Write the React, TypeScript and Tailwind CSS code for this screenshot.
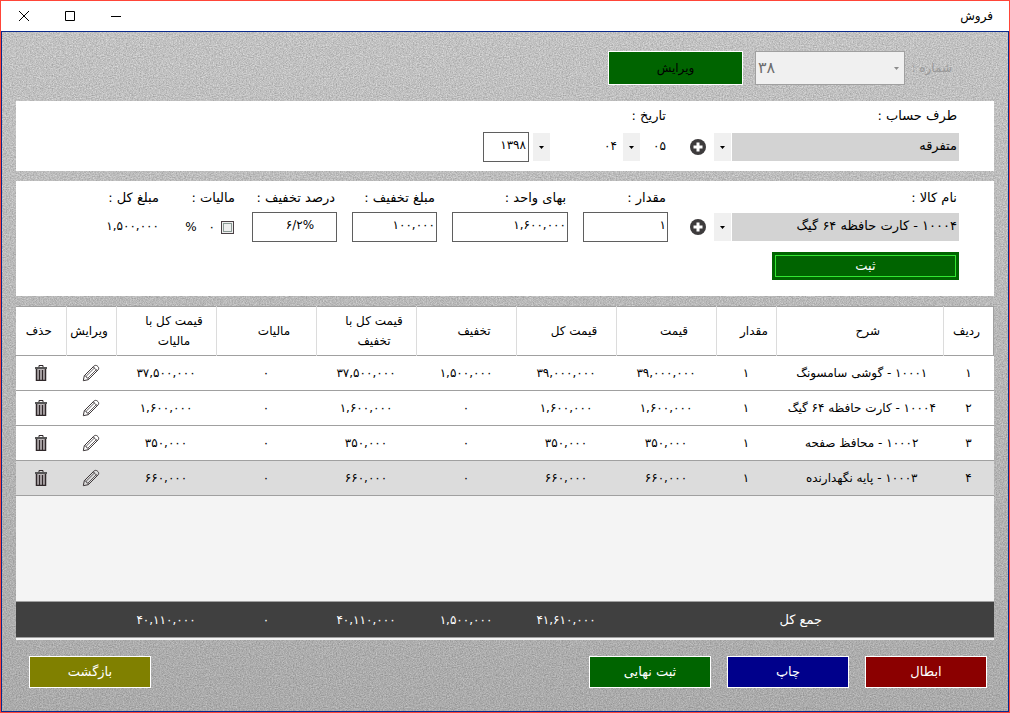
import { useState } from 'react';
import type { ReactNode } from 'react';
import clsx from 'clsx';

interface Line {
  title: string;
  qty: string;
  price: string;
  total: string;
  discount: string;
  afterDiscount: string;
  tax: string;
  afterTax: string;
}

const DIGITS = ['۰', '۱', '۲', '۳', '۴', '۵', '۶', '۷', '۸', '۹'];

const LINES: Line[] = [
  {
    title: '۱۰۰۰۱ - گوشی سامسونگ',
    qty: '۱',
    price: '۳۹,۰۰۰,۰۰۰',
    total: '۳۹,۰۰۰,۰۰۰',
    discount: '۱,۵۰۰,۰۰۰',
    afterDiscount: '۳۷,۵۰۰,۰۰۰',
    tax: '۰',
    afterTax: '۳۷,۵۰۰,۰۰۰',
  },
  {
    title: '۱۰۰۰۴ - کارت حافظه ۶۴ گیگ',
    qty: '۱',
    price: '۱,۶۰۰,۰۰۰',
    total: '۱,۶۰۰,۰۰۰',
    discount: '۰',
    afterDiscount: '۱,۶۰۰,۰۰۰',
    tax: '۰',
    afterTax: '۱,۶۰۰,۰۰۰',
  },
  {
    title: '۱۰۰۰۲ - محافظ صفحه',
    qty: '۱',
    price: '۳۵۰,۰۰۰',
    total: '۳۵۰,۰۰۰',
    discount: '۰',
    afterDiscount: '۳۵۰,۰۰۰',
    tax: '۰',
    afterTax: '۳۵۰,۰۰۰',
  },
  {
    title: '۱۰۰۰۳ - پایه نگهدارنده',
    qty: '۱',
    price: '۶۶۰,۰۰۰',
    total: '۶۶۰,۰۰۰',
    discount: '۰',
    afterDiscount: '۶۶۰,۰۰۰',
    tax: '۰',
    afterTax: '۶۶۰,۰۰۰',
  },
];

const INPUT = 'h-[30px] w-full border border-[#5f5f5f] bg-white px-px pb-1';

function Fabric() {
  return (
    <>
      <svg className="absolute inset-0 h-full w-full" aria-hidden="true">
        <filter id="fabric" x="0" y="0" width="100%" height="100%" colorInterpolationFilters="sRGB">
          <feTurbulence type="fractalNoise" baseFrequency="0.7 0.9" numOctaves="2" seed="4" />
          <feColorMatrix values="0.32 0 0 0 0.6  0.32 0 0 0 0.6  0.32 0 0 0 0.6  0 0 0 0 1" />
        </filter>
        <rect width="100%" height="100%" filter="url(#fabric)" />
      </svg>
      <div className="absolute inset-0 bg-linear-to-b from-black/0 to-black/12" />
    </>
  );
}

function PencilIcon() {
  return (
    <svg width="18" height="18" viewBox="0 0 18 18" fill="none" stroke="#3c3638" strokeLinejoin="round">
      <path d="M1.3 16.7l1-5L11.8 2.200c1-1 2.500-1.200 3.600-.1l.6.6c1 1 .9 2.400-.1 3.400L6.300 15.700z" />
      <path d="M2.300 11.700l1.800.5.5 1.500 1.500.4.2 1.600M4.200 12.200l8.600-8.600M6 14l8.600-8.600M11.200 2.900l3.900 3.900" strokeWidth="0.8" />
    </svg>
  );
}

function TrashIcon() {
  return (
    <svg width="12" height="16" viewBox="0 0 12 16" fill="none" stroke="#2f2729">
      <path d="M4 2.500v-2h4v2" />
      <path d="M0 3h12" stroke="#555" strokeWidth="2" />
      <path d="M1.500 4v11.500h9V4" strokeWidth="1.500" fill="#b9b3b5" />
      <path d="M4.500 5v10M7.500 5v10" strokeWidth="1.300" />
    </svg>
  );
}

function Caret({ className }: { className?: string }) {
  return (
    <svg width="5" height="3" viewBox="0 0 5 3" className={className} aria-hidden="true">
      <path d="M0 0h5L2.500 3z" fill="currentColor" />
    </svg>
  );
}

function AddButton({ label }: { label: string }) {
  return (
    <button type="button" aria-label={label} className="ms-2 me-[22px] shrink-0">
      <svg width="16" height="16" viewBox="0 0 16 16">
        <circle cx="8" cy="8" r="8" fill="#3d3b3c" />
        <path d="M8 3.500v9M3.500 8h9" stroke="#fff" strokeWidth="3" />
      </svg>
    </button>
  );
}

interface ComboProps {
  id: string;
  value: string;
  label?: string;
  className?: string;
  filled?: boolean;
}

function Combo({ id, value, label, className, filled }: ComboProps) {
  return (
    <div className={clsx('relative h-7 shrink-0', className)}>
      <select
        id={id}
        aria-label={label}
        defaultValue={value}
        className={clsx(
          'h-full w-full appearance-none ps-[2px] pe-[18px] pb-[2px]',
          filled ? 'bg-[#d3d3d3] text-[13px]' : 'bg-white',
        )}
      >
        <option>{value}</option>
      </select>
      <span className="pointer-events-none absolute inset-y-0 left-0 flex w-[18px] items-center justify-center border-r border-white bg-[#f0f0f0] pr-px">
        <Caret />
      </span>
    </div>
  );
}

interface FieldProps {
  id: string;
  label: string;
  className?: string;
  children: ReactNode;
}

function Field({ id, label, className, children }: FieldProps) {
  return (
    <div className={clsx('flex shrink-0 flex-col gap-1', className)}>
      <label htmlFor={id} className="h-5 ps-[2px] text-[13px] leading-5 whitespace-nowrap">
        {label}
      </label>
      <div className="flex h-[30px] items-center">{children}</div>
    </div>
  );
}

function TitleBar() {
  return (
    <header className="flex h-[30px] shrink-0 items-center justify-between bg-white">
      <h1 className="px-4">فروش</h1>
      <div dir="ltr" className="flex h-full">
        <button type="button" aria-label="بستن" className="flex w-[46px] items-center justify-center">
          <svg width="10" height="10" stroke="#000">
            <path d="M0 0l10 10M10 0L0 10" />
          </svg>
        </button>
        <button type="button" aria-label="بزرگ" className="flex w-[46px] items-center justify-center">
          <svg width="10" height="10" stroke="#000" fill="none">
            <path d="M.5.5h9v9h-9z" />
          </svg>
        </button>
        <button type="button" aria-label="کوچک" className="flex w-[46px] items-center justify-center">
          <svg width="10" height="10" stroke="#000">
            <path d="M0 5.500h10" />
          </svg>
        </button>
      </div>
    </header>
  );
}

function AccountPanel() {
  return (
    <section className="flex h-[70px] bg-white ps-[35px] pt-[5px]">
      <Field id="account" label="طرف حساب :" className="gap-[6px]">
        <Combo id="account" value="متفرقه" filled className="w-[245px]" />
        <AddButton label="طرف حساب جدید" />
      </Field>
      <Field id="day" label="تاریخ :" className="gap-[6px]">
        <Combo id="day" value="۰۵" className="w-[45px]" />
        <Combo id="month" label="ماه" value="۰۴" className="ms-1 w-[86px]" />
        <input
          aria-label="سال"
          defaultValue="۱۳۹۸"
          className="ms-1 h-[30px] w-[46px] border border-[#5f5f5f] ps-[2px] pb-1"
        />
      </Field>
    </section>
  );
}

function ItemPanel() {
  return (
    <section className="flex h-[115px] flex-col gap-[10px] bg-white ps-[35px] pt-[7px]">
      <div className="flex">
        <Field id="item" label="نام کالا :">
          <Combo id="item" value="۱۰۰۰۴ - کارت حافظه ۶۴ گیگ" filled className="w-[245px]" />
          <AddButton label="کالای جدید" />
        </Field>
        <div className="flex gap-[15px]">
          <Field id="qty" label="مقدار :" className="w-[85px]">
            <input id="qty" defaultValue="۱" className={INPUT} />
          </Field>
          <Field id="unit" label="بهای واحد :" className="w-[116px]">
            <input id="unit" defaultValue="۱,۶۰۰,۰۰۰" className={INPUT} />
          </Field>
          <Field id="off" label="مبلغ تخفیف :" className="w-[85px]">
            <input id="off" defaultValue="۱۰۰,۰۰۰" className={INPUT} />
          </Field>
          <Field id="percent" label="درصد تخفیف :" className="w-[85px]">
            <input id="percent" dir="ltr" defaultValue="۶/۲%" className={clsx(INPUT, 'ps-3 text-center')} />
          </Field>
          <Field id="tax" label="مالیات :" className="w-[61px]">
            <input
              id="tax"
              type="checkbox"
              className="ms-[3px] h-[13px] w-[13px] appearance-none border border-[#4a4044] bg-[#eee] outline-1 -outline-offset-3 outline-[#8a9a94]"
            />
            <span className="ms-[6px]">۰</span>
            <span className="ms-3">%</span>
          </Field>
          <div className="flex flex-col gap-1 ps-[2px]">
            <span className="h-5 text-[13px] leading-5">مبلغ کل :</span>
            <span className="h-[30px] leading-7">۱,۵۰۰,۰۰۰</span>
          </div>
        </div>
      </div>
      <button type="button" className="h-7 w-[187px] bg-[#006400] p-[3px] text-[13px] text-white">
        <span className="flex h-full items-center justify-center border border-[#32e632]">ثبت</span>
      </button>
    </section>
  );
}

function LinesTable() {
  const [selected, setSelected] = useState(3);
  const th = 'border-l border-[#dcdcdc] font-normal leading-5';

  return (
    <table className="w-full table-fixed border-collapse bg-[#f4f4f4] text-center">
      <colgroup>
        <col className="w-[50px]" />
        <col />
        <col className="w-[60px]" />
        <col className="w-[100px]" />
        <col className="w-[100px]" />
        <col className="w-[100px]" />
        <col className="w-[100px]" />
        <col className="w-[100px]" />
        <col className="w-[100px]" />
        <col className="w-[50px]" />
        <col className="w-[50px]" />
      </colgroup>
      <thead>
        <tr className="h-[49px] border-y border-[#a0a0a0] bg-white">
          <th className={clsx(th, 'border-r border-r-[#a0a0a0] pr-1')}>ردیف</th>
          <th className={clsx(th, 'pl-4')}>شرح</th>
          <th className={clsx(th, 'pl-4')}>مقدار</th>
          <th className={clsx(th, 'pl-4')}>قیمت</th>
          <th className={clsx(th, 'pl-4')}>قیمت کل</th>
          <th className={clsx(th, 'pl-4')}>تخفیف</th>
          <th className={clsx(th, 'pl-4')}>
            قیمت کل با
            <br />
            تخفیف
          </th>
          <th className={clsx(th, 'pl-4')}>مالیات</th>
          <th className={clsx(th, 'pl-4')}>
            قیمت کل با
            <br />
            مالیات
          </th>
          <th className={clsx(th, 'pr-1')}>ویرایش</th>
          <th className="pr-1 font-normal">حذف</th>
        </tr>
      </thead>
      <tbody>
        {LINES.map((line, i) => (
          <tr
            key={line.title}
            onClick={() => setSelected(i)}
            className={clsx('h-[35px] border-b border-[#a0a0a0]', selected === i ? 'bg-[#dcdcdc]' : 'bg-white')}
          >
            <td>{DIGITS[i + 1]}</td>
            <td className="pl-1">{line.title}</td>
            <td>{line.qty}</td>
            <td>{line.price}</td>
            <td>{line.total}</td>
            <td>{line.discount}</td>
            <td>{line.afterDiscount}</td>
            <td>{line.tax}</td>
            <td>{line.afterTax}</td>
            <td>
              <button type="button" aria-label="ویرایش" className="mx-auto block">
                <PencilIcon />
              </button>
            </td>
            <td>
              <button type="button" aria-label="حذف" className="mx-auto block">
                <TrashIcon />
              </button>
            </td>
          </tr>
        ))}
        <tr className="h-[106px]">
          <td colSpan={11} />
        </tr>
      </tbody>
      <tfoot>
        <tr className="h-9 border-y border-[#a0a0a0] bg-[#404040] text-white">
          <td colSpan={4} className="pr-2 text-[13px]">
            جمع کل
          </td>
          <td>۴۱,۶۱۰,۰۰۰</td>
          <td>۱,۵۰۰,۰۰۰</td>
          <td>۴۰,۱۱۰,۰۰۰</td>
          <td>۰</td>
          <td>۴۰,۱۱۰,۰۰۰</td>
          <td colSpan={2} />
        </tr>
      </tfoot>
    </table>
  );
}

function ActionButton({ className, children }: { className: string; children: ReactNode }) {
  return (
    <button type="button" className={clsx('h-8 w-[122px] border border-white text-[13px] text-white', className)}>
      {children}
    </button>
  );
}

export default function App() {
  return (
    <div
      dir="rtl"
      className="flex min-h-screen flex-col border border-[#ff4538] font-['DejaVu_Sans',sans-serif] text-xs text-black"
    >
      <TitleBar />
      <main className="relative flex-1 border border-[#0a2a8c]">
        <Fabric />
        <div className="relative px-[14px] pt-[19px] pb-[22px]">
          <div className="mb-4 flex h-[34px] items-center ps-[42px]">
            <label htmlFor="number" className="w-[47px] whitespace-nowrap text-[#999]">
              شماره :
            </label>
            <div className="relative h-full w-[150px]">
              <select
                id="number"
                dir="ltr"
                disabled
                className="h-full w-full appearance-none border border-[#a0a0a0] bg-[#f0f0f0] px-[2px] text-base text-[#6d6d6d] opacity-100"
              >
                <option>۳۸</option>
              </select>
              <Caret className="pointer-events-none absolute top-4 right-[6px] text-[#8c8c8c]" />
            </div>
            <button type="button" disabled className="ms-3 h-full w-[135px] border border-white bg-[#006400] text-black">
              ویرایش
            </button>
          </div>

          <div className="flex flex-col gap-[10px]">
            <AccountPanel />
            <ItemPanel />
            <div className="border-b-2 border-[#f4f4f4]">
              <LinesTable />
            </div>
          </div>

          <footer className="mt-4 flex items-center gap-4 ps-[7px] pe-[13px]">
            <ActionButton className="bg-[#8b0000]">ابطال</ActionButton>
            <ActionButton className="bg-[#00008b]">چاپ</ActionButton>
            <ActionButton className="bg-[#006400]">ثبت نهایی</ActionButton>
            <ActionButton className="ms-auto bg-[#808000]">بازگشت</ActionButton>
          </footer>
        </div>
      </main>
    </div>
  );
}
